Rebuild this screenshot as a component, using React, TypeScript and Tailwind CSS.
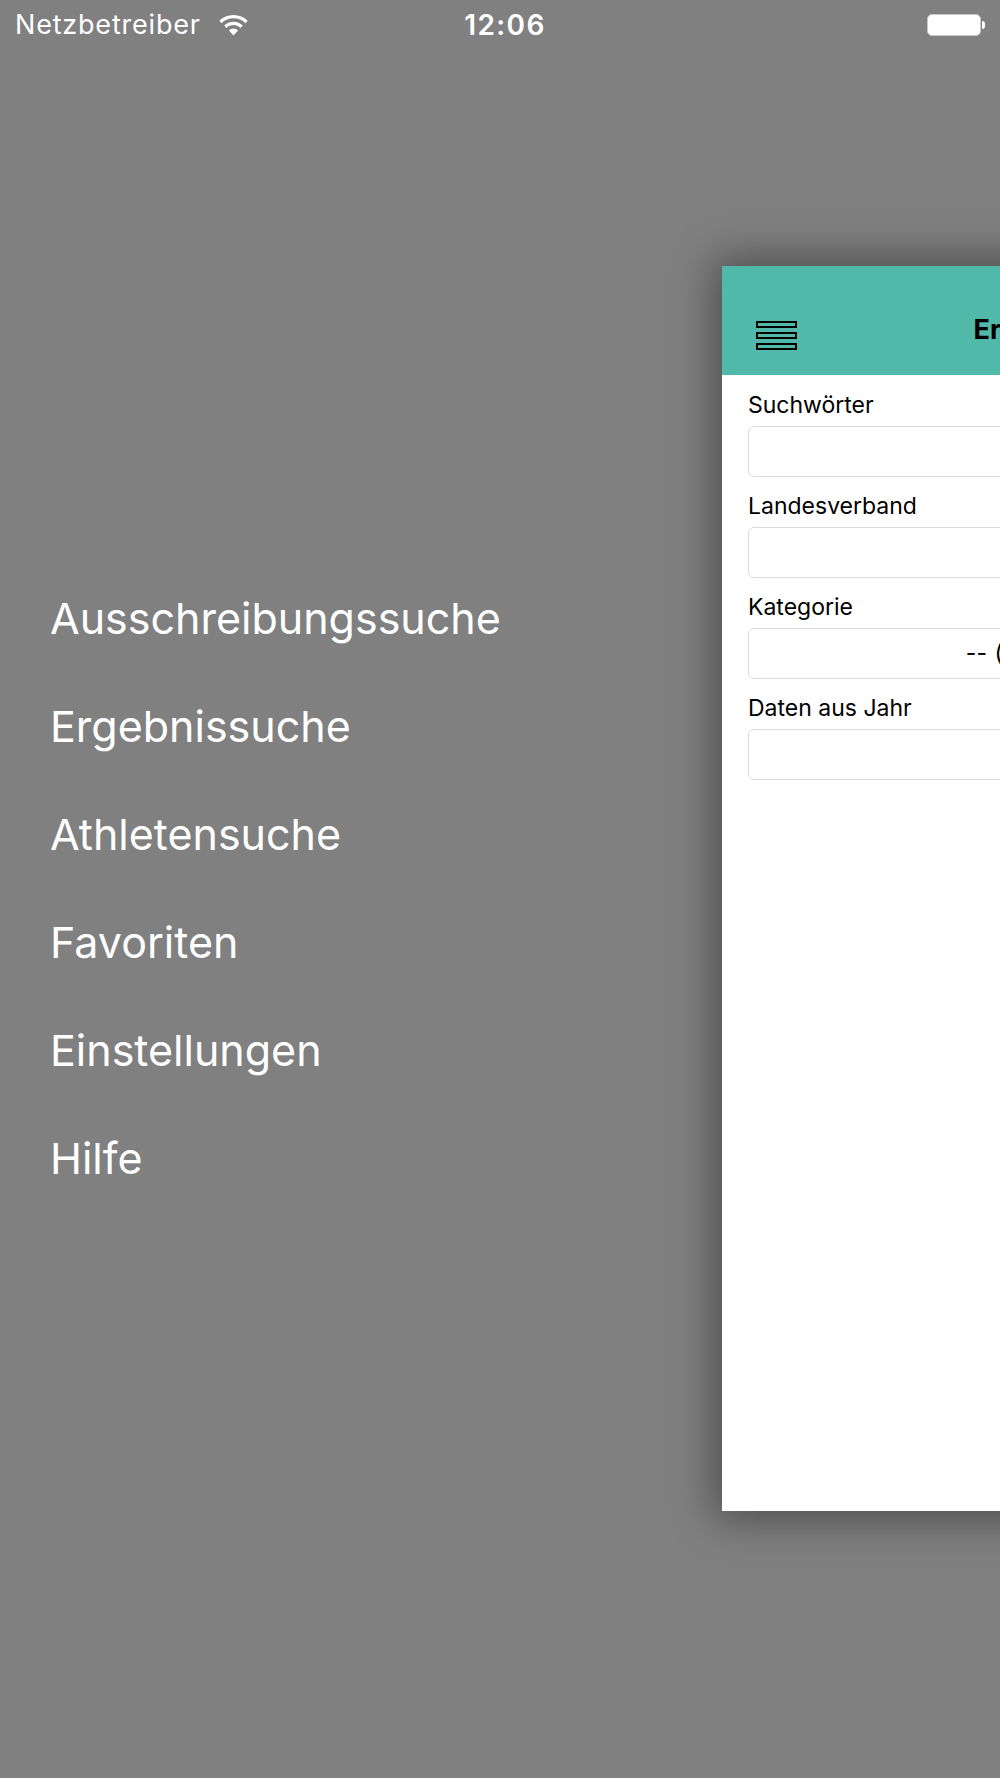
import React from "react";

const menu = [
  "Ausschreibungssuche",
  "Ergebnissuche",
  "Athletensuche",
  "Favoriten",
  "Einstellungen",
  "Hilfe",
];

const fields = [
  { label: "Suchwörter", value: "" },
  { label: "Landesverband", value: "" },
  { label: "Kategorie", value: "-- (Bitte wählen) --" },
  { label: "Daten aus Jahr", value: "" },
];

function Wifi() {
  return (
    <svg width="29" height="21" viewBox="0 0 29 21" fill="white">
      <path d="M14.5 0C8.9 0 3.9 2.2 0.3 5.8l2.3 2.4C5.6 5.2 9.8 3.3 14.5 3.3s8.9 1.9 11.9 4.9l2.3-2.4C25.1 2.2 20.1 0 14.5 0z" />
      <path d="M14.5 6.8c-3.6 0-6.9 1.4-9.3 3.8l2.3 2.4c1.8-1.8 4.3-2.9 7-2.9s5.2 1.1 7 2.9l2.3-2.4c-2.4-2.4-5.7-3.8-9.3-3.8z" />
      <path d="M14.5 13.6c-1.7 0-3.3 0.7-4.5 1.9L14.5 20.5l4.5-5C17.8 14.3 16.2 13.6 14.5 13.6z" />
    </svg>
  );
}

function StatusBar() {
  return (
    <div className="flex h-[50px] items-center justify-between px-[15px] text-white">
      <div className="flex w-[320px] items-center gap-[18px]">
        <span className="text-[27px] tracking-[0.8px]">Netzbetreiber</span>
        <Wifi />
      </div>
      <span className="pl-[10px] text-[28px] font-semibold tracking-[1.4px]">12:06</span>
      <div className="flex w-[320px] items-center justify-end">
        <div className="h-[22px] w-[54px] rounded-[5px] border border-[#c8c8c8] bg-white" />
        <div className="ml-[1px] h-[8px] w-[3px] rounded-r-[3px] bg-white" />
      </div>
    </div>
  );
}

function Hamburger() {
  return (
    <div className="flex w-[41px] flex-col gap-[4px]">
      <div className="h-[7px] border-2 border-black" />
      <div className="h-[7px] border-2 border-black" />
      <div className="h-[7px] border-2 border-black" />
    </div>
  );
}

export default function App() {
  return (
    <div
      className="relative h-[1778px] w-[1000px] overflow-hidden bg-[#808080]"
      style={{ fontFamily: "Inter, 'Noto Sans', sans-serif" }}
    >
      <StatusBar />

      <nav className="flex flex-col gap-[60px] pl-[50px] pt-[544px]">
        {menu.map((m) => (
          <div key={m} className="h-[48px] text-[43px] leading-[48px] text-white">
            {m}
          </div>
        ))}
      </nav>

      {/* Slid-over content view */}
      <div className="absolute left-[722px] top-[266px] h-[1245px] w-[700px] bg-white shadow-[0_0_40px_8px_rgba(0,0,0,0.4)]">
        <header className="relative flex h-[109px] items-center justify-center bg-[#51b9aa]">
          <div className="absolute left-[34px] top-[55px]">
            <Hamburger />
          </div>
          <h1 className="mt-[20px] text-[27px] font-bold text-black">Ergebnissuche</h1>
        </header>
        <div className="px-[26px] pt-[17px]">
          {fields.map((f) => (
            <div key={f.label} className="mb-[16px]">
              <div className="h-[26px] text-[23px] leading-[26px] text-black">{f.label}</div>
              <div className="mt-[8px] flex h-[51px] items-center justify-center rounded-[6px] border border-[#dadada] text-[23px] tracking-[0.4px] text-black">
                {f.value}
              </div>
            </div>
          ))}
        </div>
      </div>
    </div>
  );
}
